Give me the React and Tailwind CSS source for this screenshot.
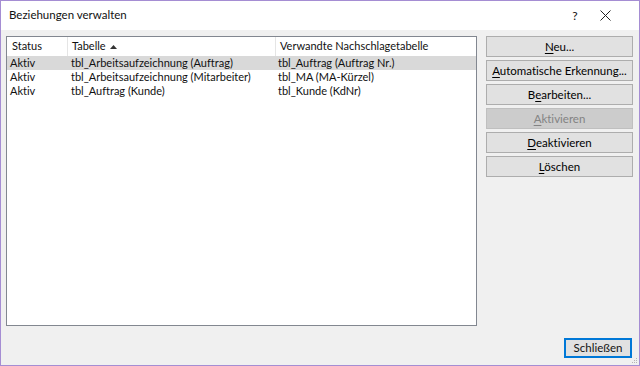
import React from 'react';

const rows = [
  { status: 'Aktiv', table: 'tbl_Arbeitsaufzeichnung (Auftrag)', lookup: 'tbl_Auftrag (Auftrag Nr.)' },
  { status: 'Aktiv', table: 'tbl_Arbeitsaufzeichnung (Mitarbeiter)', lookup: 'tbl_MA (MA-Kürzel)' },
  { status: 'Aktiv', table: 'tbl_Auftrag (Kunde)', lookup: 'tbl_Kunde (KdNr)' },
];

function Btn({ pre = '', hot, post = '', disabled }) {
  return (
    <button
      className={`h-[21px] w-full border text-[11.5px] leading-none whitespace-nowrap ${
        disabled
          ? 'bg-[#cccccc] border-[#bfbfbf] text-[#838383]'
          : 'bg-[#e1e1e1] border-[#adadad] text-black'
      }`}
    >
      {pre}
      <span className="underline underline-offset-2">{hot}</span>
      {post}
    </button>
  );
}

export default function App() {
  return (
    <div
      className="relative w-[640px] h-[366px] border border-[#a58dd3] bg-[#f0f0f0] flex flex-col text-[#111] whitespace-nowrap [font-variant-ligatures:none]"
      style={{ fontFamily: 'Lato, "Noto Sans", sans-serif' }}
    >
      {/* Title bar */}
      <div className="h-[29px] bg-white flex items-center shrink-0">
        <span className="pl-[8px] text-[11.5px] -mt-[1px]">Beziehungen verwalten</span>
        <span className="ml-auto w-[20px] text-center text-[12px]">?</span>
        <span className="w-[40px] mr-[14px] flex justify-center">
          <svg width="11" height="11" viewBox="0 0 11 11">
            <path d="M0.5 0.5 L10.5 10.5 M10.5 0.5 L0.5 10.5" stroke="#222" strokeWidth="1" />
          </svg>
        </span>
      </div>

      <div className="flex-1 flex flex-col px-[5px] pt-[6px] pb-[7px]">
        <div className="flex gap-[9px] h-[290px]">
          {/* List */}
          <div className="w-[471px] border border-[#828790] bg-white text-[11px]">
            <div className="flex h-[19px] items-center">
              <div className="w-[60px] pl-[5px]">Status</div>
              <div className="w-[208px] pl-[4px] border-l border-[#e5e5e5] h-full flex items-center gap-[4px]">
                Tabelle
                <svg width="7" height="4" viewBox="0 0 7 4">
                  <path d="M0 4 L3.5 0 L7 4 Z" fill="#333" />
                </svg>
              </div>
              <div className="flex-1 pl-[4px] border-l border-[#e5e5e5] h-full flex items-center">
                Verwandte Nachschlagetabelle
              </div>
            </div>
            {rows.map((r, i) => (
              <div
                key={i}
                className={`flex h-[14px] items-center ${i === 0 ? 'bg-[#d9d9d9]' : ''}`}
              >
                <div className="w-[60px] pl-[3px]">{r.status}</div>
                <div className="w-[208px] pl-[4px]">{r.table}</div>
                <div className="flex-1 pl-[3px]">{r.lookup}</div>
              </div>
            ))}
          </div>

          {/* Buttons */}
          <div className="w-[147px] flex flex-col gap-[3px]">
            <Btn hot="N" post="eu..." />
            <Btn hot="A" post="utomatische Erkennung..." />
            <Btn pre="B" hot="e" post="arbeiten..." />
            <Btn hot="A" post="ktivieren" disabled />
            <Btn hot="D" post="eaktivieren" />
            <Btn hot="L" post="öschen" />
          </div>
        </div>

        <div className="flex-1 flex items-end justify-end pr-[2px]">
          <button className="w-[68px] h-[20px] bg-[#e1e1e1] border-2 border-[#0078d7] text-[11.5px] leading-none">
            Schließen
          </button>
        </div>
      </div>

      {/* Resize grip */}
      <svg className="absolute right-[1px] bottom-[1px]" width="7" height="7" viewBox="0 0 7 7">
        <g fill="#b5b5b5">
          <rect x="5" y="1" width="1" height="1" />
          <rect x="3" y="3" width="1" height="1" />
          <rect x="5" y="3" width="1" height="1" />
          <rect x="1" y="5" width="1" height="1" />
          <rect x="3" y="5" width="1" height="1" />
          <rect x="5" y="5" width="1" height="1" />
        </g>
      </svg>
    </div>
  );
}
